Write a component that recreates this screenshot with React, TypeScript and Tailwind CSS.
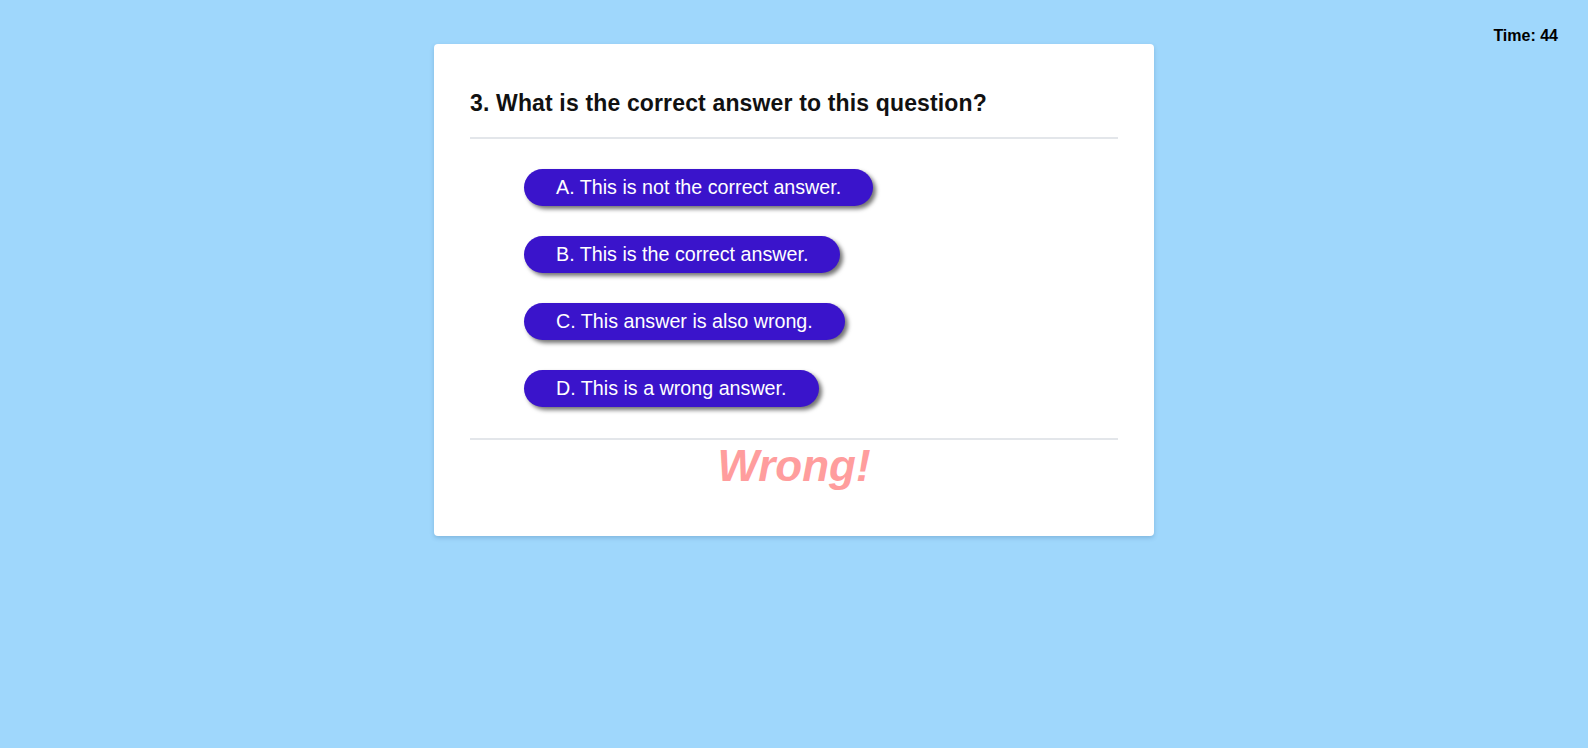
import React from 'react';

const answers = [
  'A. This is not the correct answer.',
  'B. This is the correct answer.',
  'C. This answer is also wrong.',
  'D. This is a wrong answer.',
];

const App: React.FC = () => {
  return (
    <div
      className="relative min-h-screen bg-[#9fd7fc] pt-[44px]"
      style={{ fontFamily: '"Liberation Sans", Arial, sans-serif' }}
    >
      <div className="absolute top-[24px] right-[30px] text-[16px] font-bold text-black">Time: 44</div>

      <div className="mx-auto w-[720px] rounded bg-white px-9 pt-[46px] pb-[45px] shadow-[0_2px_4px_rgba(40,90,140,0.25)]">
        <h2 className="text-[23px] font-bold leading-[26px] tracking-[0.15px] text-[#111]">
          3. What is the correct answer to this question?
        </h2>
        <div className="mt-[21px] h-[2px] bg-[#e3e6ea]" />

        <div className="flex flex-col items-start gap-[30px] pl-[54px] pt-[30px] pb-[31px]">
          {answers.map((a) => (
            <button
              key={a}
              className="rounded-full bg-[#3a14cb] px-8 py-[7px] text-[19.7px] leading-[23px] text-white shadow-[3px_3px_4px_rgba(0,0,0,0.55)]"
            >
              {a}
            </button>
          ))}
        </div>

        <div className="h-[2px] bg-[#e3e6ea]" />
        <div className="text-center text-[44px] font-bold italic leading-[51px] text-[#ff9d9d]">Wrong!</div>
      </div>
    </div>
  );
};

export default App;
